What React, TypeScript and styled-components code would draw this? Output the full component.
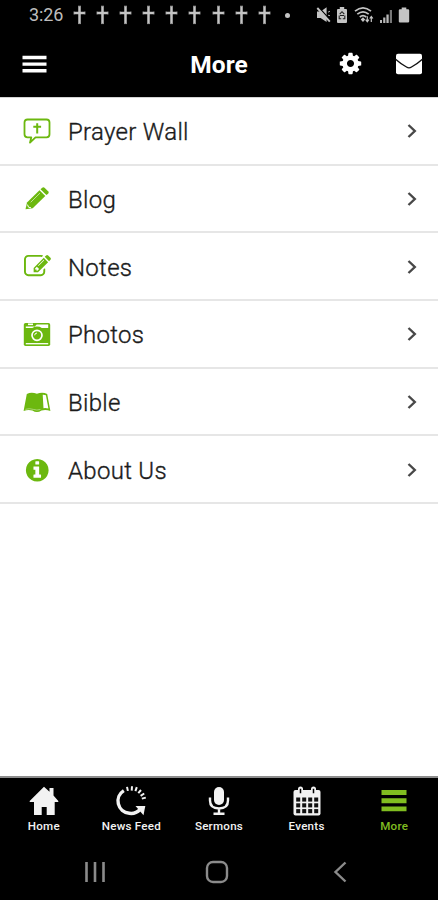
import React from 'react';
import styled, { createGlobalStyle } from 'styled-components';

const GREEN = '#6cb80f';

const GlobalStyle = createGlobalStyle`
  body { margin: 0; background: #fff; }
  * { box-sizing: border-box; }
`;

const Screen = styled.div`
  width: 438px;
  height: 900px;
  display: flex;
  flex-direction: column;
  background: #fff;
  font-family: Roboto, 'Liberation Sans', sans-serif;
  overflow: hidden;
`;

const StatusBar = styled.div`
  height: 30px;
  flex: none;
  display: flex;
  align-items: center;
  padding-left: 29px;
  background: #000;
  color: #bdbdbd;
`;

const Clock = styled.span`
  width: 44px;
  font-size: 18px;
  line-height: 30px;
  letter-spacing: -0.1px;
`;

const Crosses = styled.div`
  display: flex;
  gap: 10.1px;
`;

const Dot = styled.span`
  width: 5px;
  height: 5px;
  margin-left: 14px;
  border-radius: 50%;
  background: #c4c4c4;
`;

const StatusIcons = styled.div`
  display: flex;
  align-items: center;
  margin-left: 26px;
  gap: 5.6px;
`;

const Header = styled.header`
  height: 67px;
  flex: none;
  display: grid;
  grid-template-columns: 1fr auto 1fr;
  align-items: center;
  padding: 0 15px 0 22px;
  background: #000;
  color: #fff;
`;

const Title = styled.h1`
  margin: 2px 7px 0 0;
  font-size: 24.5px;
  line-height: 28px;
  font-weight: 700;
`;

const HeaderActions = styled.div`
  display: flex;
  justify-content: flex-end;
  align-items: center;
  gap: 32px;
`;

const List = styled.main`
  flex: 1;
  display: flex;
  flex-direction: column;
  border-top: 1px solid #d4d4d4;
`;

const Row = styled.div`
  height: 67.7px;
  flex: none;
  display: flex;
  align-items: center;
  padding: 1px 19px 0 22px;
  border-bottom: 2px solid #e6e6e6;
`;

const RowIcon = styled.span`
  width: 30px;
  height: 30px;
  display: flex;
  align-items: center;
  justify-content: center;
`;

const RowLabel = styled.span`
  flex: 1;
  padding: 2px 0 0 16px;
  font-size: 24px;
  line-height: 30px;
  color: #1b1b1b;
  font-weight: 300;
  -webkit-text-stroke: 0.35px #1b1b1b;
  letter-spacing: 0.3px;
`;

const TabBar = styled.nav`
  height: 68px;
  flex: none;
  display: grid;
  grid-template-columns: repeat(5, 1fr);
  border-top: 2px solid #8c8c8c;
  background: #000;
`;

const Tab = styled.div<{ $active?: boolean }>`
  display: flex;
  flex-direction: column;
  align-items: center;
  padding-top: 8px;
  color: ${(p) => (p.$active ? '#80bd20' : '#f2f2f2')};
`;

const TabLabel = styled.span`
  margin-top: 3px;
  font-size: 11.6px;
  line-height: 14px;
  font-weight: 500;
  white-space: nowrap;
  letter-spacing: 0.25px;
`;

const SystemBar = styled.div`
  height: 56px;
  flex: none;
  display: flex;
  align-items: center;
  padding: 0 0 0 84px;
  background: #000;
`;

const RecentsIcon = styled.svg`
  margin-right: 99px;
`;

const CircleHomeIcon = styled.svg`
  margin-right: 104px;
`;

const CrossMark = () => (
  <svg width="13" height="20" viewBox="0 0 13 20">
    <path d="M6.5 1.2V18.6M1 8H12" stroke="#c4c4c4" strokeWidth="2.5" />
    <path d="M5 1.2h3M5 18.6h3M1 6.5v3M12 6.5v3" stroke="#aaa" strokeWidth=".8" />
  </svg>
);

const Mute = () => (
  <svg width="15" height="18" viewBox="0 0 15 18" fill="#c4c4c4">
    <path d="M1 5.500h3.600l6-4.300V16l-6-4H1z" />
    <path d="M2.500 1.200l12 13" stroke="#000" strokeWidth="1.400" />
    <path d="M1.300 2L13.800 15.700" stroke="#c4c4c4" strokeWidth="1.900" />
    <path d="M12 6.200l2-1M12 9.200l2 .5" stroke="#aaa" strokeWidth="1" />
  </svg>
);

const Saver = () => (
  <svg width="12" height="18" viewBox="0 0 12 18">
    <path d="M3.800 1h4.400v2H10q1 0 1 1v12q0 1-1 1H2q-1 0-1-1V4q0-1 1-1h1.800z" fill="#c4c4c4" />
    <path d="M3.700 8.200L6 5.700l2.300 2.500M3.200 9.500v3.300h2M8.800 9.500v3.300h-2M4 9.500h4" stroke="#222" strokeWidth="1.100" fill="none" />
  </svg>
);

const Wifi = () => (
  <svg width="20" height="18" viewBox="0 0 20 18" fill="none" stroke="#c4c4c4">
    <path d="M1 5.200Q9-1.600 17 5.200M3.300 8.200q5.700-4.800 11.400 0M5.800 11q3.200-2.800 6.400 0" strokeWidth="1.700" />
    <path d="M9 11.200l2.200 2.300L9 16l-2.300-2.500z" fill="#c4c4c4" stroke="none" />
    <path d="M13.300 10.200v5.400m-1.600-1.900l1.600 2 1.600-2M17.300 16v-5.400m-1.600 1.900l1.600-2 1.600 2" strokeWidth="1.200" />
  </svg>
);

const Signal = () => (
  <svg width="13" height="17" viewBox="0 0 13 17" fill="#b8b8b8">
    <path d="M0 13h2v3H0zM3.200 10.500h2.200V16H3.200zM6.400 7.500h2.300V16H6.400z" />
    <path d="M9.800 3H12v13H9.800z" fill="#777" />
  </svg>
);

const Battery = () => (
  <svg width="12" height="18" viewBox="0 0 12 18">
    <path d="M3.700 1.500h4.600v1.700H10q1.200 0 1.200 1.100v11.200q0 1-1.200 1H2q-1.200 0-1.200-1V4.300q0-1.100 1.200-1.100h1.700z" fill="#c4c4c4" />
  </svg>
);

const MenuIcon = () => (
  <svg width="25" height="18" viewBox="0 0 25 18" fill="#fff">
    <path d="M.5 .8h24V4.200H.5zM.5 7.500h24v3.300H.5zM.5 14h24v3.400H.5z" />
  </svg>
);

const Gear = () => (
  <svg width="25" height="25" viewBox="0 0 1792 1792" fill="#fff">
    <path d="M1152 896q0-106-75-181t-181-75-181 75-75 181 75 181 181 75 181-75 75-181zm512-109v222q0 12-8 23t-20 13l-185 28q-19 54-39 91 35 50 107 138 10 12 10 25t-9 23q-27 37-99 108t-94 71q-12 0-26-9l-138-108q-44 23-91 38-16 136-29 186-7 28-36 28h-222q-14 0-24.500-8.500t-11.500-21.500l-28-184q-49-16-90-37l-141 107q-10 9-25 9-14 0-25-11-126-114-165-168-7-10-7-23 0-12 8-23 15-21 51-66.500t54-70.500q-27-50-41-99l-183-27q-13-2-21-12.500t-8-23.500v-222q0-12 8-23t19-13l186-28q14-46 39-92-40-57-107-138-10-12-10-24 0-10 9-23 26-36 98.500-107.500t94.500-71.500q13 0 26 10l138 107q44-23 91-38 16-136 29-186 7-28 36-28h222q14 0 24.500 8.500t11.500 21.500l28 184q49 16 90 37l142-107q9-9 24-9 13 0 25 10 129 119 165 170 7 8 7 22 0 12-8 23-15 21-51 66.500t-54 70.500q26 50 41 98l183 28q13 2 21 12.500t8 23.500z" />
  </svg>
);

const Mail = () => (
  <svg width="28" height="22" viewBox="0 0 28 22">
    <rect x="1" y=".8" width="26" height="20.400" rx="2" fill="#fff" />
    <path d="M.6 6.200Q6 11 11.500 14q2.500 1.800 5 0Q22 11 27.400 6.200" stroke="#111" strokeWidth="1.400" fill="none" />
  </svg>
);

const PrayerIcon = () => (
  <svg width="28" height="27" viewBox="0 0 28 27" fill="none" stroke={GREEN}>
    <path d="M4.500 1.500h19q3 0 3 3v11.800q0 3-3 3H12.500L7 24.600l1.300-5.300H4.500q-3 0-3-3V4.500q0-3 3-3z" strokeWidth="1.800" strokeLinejoin="round" />
    <path d="M14.200 5.200v10.400M10.300 8.700h7.800" strokeWidth="2" />
  </svg>
);

const PencilIcon = () => (
  <svg width="26" height="26" viewBox="0 0 26 26">
    <path d="M1.500 23.300L3 16.500 15.500 4.300l5.800 5.700L8.700 22.300z" fill={GREEN} />
    <path d="M16.500 3.300l1.700-1.600q1.300-1 2.600.2l3.300 3.300q1.200 1.300.1 2.500L22.400 9z" fill={GREEN} />
    <path d="M6.700 16.300l9.300-9.200" stroke="#c9e6a4" strokeWidth=".9" />
    <path d="M3.500 18.600l1 2.600 2.500.6" stroke="#fff" strokeWidth="1" fill="none" />
  </svg>
);

const NotesIcon = () => (
  <svg width="27" height="27" viewBox="0 0 1792 1792" fill={GREEN}>
    <path d="M888 1184l116-116-152-152-116 116v56h96v96h56zm440-720q-16-16-33 1l-350 350q-17 17-1 33t33-1l350-350q17-17 1-33zm80 594v190q0 119-84.500 203.500t-203.500 84.500h-832q-119 0-203.500-84.500t-84.500-203.500v-832q0-119 84.500-203.500t203.500-84.500h832q63 0 117 25 15 7 18 23 3 17-9 29l-49 49q-14 14-32 8-23-6-45-6h-832q-66 0-113 47t-47 113v832q0 66 47 113t113 47h832q66 0 113-47t47-113v-126q0-13 9-22l64-64q15-15 35-7t20 29zm-96-738l288 288-672 672h-288v-288zm444 132l-92 92-288-288 92-92q28-28 68-28t68 28l152 152q28 28 28 68t-28 68z" />
  </svg>
);

const CameraIcon = () => (
  <svg width="28" height="25" viewBox="0 0 28 25">
    <rect x=".8" y="1" width="26.400" height="23" rx="1.700" fill={GREEN} />
    <path d="M2.800 4.600h9l1.900-2.100h11.500v3.400h-6.400q-2-1.300-4.800-1.300-2.600 0-4.600 1.300H2.800z" fill="#fff" />
    <rect x="5" y="1.500" width="5" height="1.600" fill="#fff" />
    <path d="M2.800 21.700h22.400" stroke="#fff" strokeWidth="1.300" />
    <circle cx="14" cy="13.300" r="6.900" fill={GREEN} />
    <circle cx="14" cy="13.300" r="5" fill="none" stroke="#fff" strokeWidth="1.700" />
    <path d="M11.700 13.300q0-2.200 2.300-2.300" stroke="#fff" strokeWidth="1" fill="none" />
  </svg>
);

const BookIcon = () => (
  <svg width="28" height="20" viewBox="0 0 28 20">
    <path d="M3.800 1.900Q8.500-.2 13.900 1.800 19.400-.2 24.200 1.900L27.400 19q-4.600-1.800-8.900-.5-2.400 1.500-4.600 1.500t-4.500-1.500Q5.200 17.200.6 19z" fill={GREEN} />
    <path d="M19.700 2.700q1.800-.1 3.200.5l2.500 13.300q-2.400-.6-4.900-.3z" fill="#fff" />
    <path d="M2.400 17.300q4.300-1.200 7.900.1 3.600 1.300 7.100.1" fill="none" stroke="#c5e3a0" strokeWidth=".7" />
  </svg>
);

const InfoIcon = () => (
  <svg width="26.500" height="26.500" viewBox="0 0 1792 1792" fill={GREEN}>
    <path d="M1152 1376v-160q0-14-9-23t-23-9h-96v-512q0-14-9-23t-23-9h-320q-14 0-23 9t-9 23v160q0 14 9 23t23 9h96v320h-96q-14 0-23 9t-9 23v160q0 14 9 23t23 9h448q14 0 23-9t9-23zm-128-896v-160q0-14-9-23t-23-9h-192q-14 0-23 9t-9 23v160q0 14 9 23t23 9h192q14 0 23-9t9-23zm640 416q0 209-103 385.500t-279.500 279.500-385.500 103-385.500-103-279.500-279.500-103-385.500 103-385.500 279.500-279.500 385.500-103 385.500 103 279.500 279.500 103 385.500z" />
  </svg>
);

const Chevron = () => (
  <svg width="14" height="18" viewBox="0 0 14 18" fill="none" stroke="#484848" strokeWidth="2.400">
    <path d="M3.500 3l6.300 6-6.300 6" />
  </svg>
);

const HomeIcon = () => (
  <svg width="30" height="30" viewBox="0 0 30 30" fill="currentColor">
    <path d="M15 .8l5.500 5V2h4v7.500L29.300 15v1h-3.600v13h-8V21h-5v8H5V16H.7v-1z" />
  </svg>
);

const NewsIcon = () => (
  <svg width="32" height="30" viewBox="0 0 32 30" fill="none" stroke="currentColor">
    <path d="M8.800 4.600A12.300 12.300 0 0 0 14.300 27.300 12.300 12.300 0 0 0 25 23.500" strokeWidth="3.400" />
    <path d="M20.500 20h9.800L28.500 29.300z" fill="currentColor" stroke="none" />
    <path d="M12 .9l.9 4M17 .3l-.3 4.300M21.800 1.200l-1.400 4M26 4l-2.700 3.200M29.200 7.500l-3.600 2.300M30.800 11.600l-4 1" strokeWidth="2" />
  </svg>
);

const MicIcon = () => (
  <svg width="24" height="30" viewBox="0 0 24 30" fill="none" stroke="currentColor">
    <rect x="7" y="1" width="10" height="18" rx="5" fill="currentColor" stroke="none" />
    <path d="M3 11.500v3q0 8 9 8t9-8v-3M12 22v6M6.500 27.700h11" strokeWidth="2.400" />
  </svg>
);

const CalendarIcon = () => {
  const cells = [3.2, 9.2, 15.2, 21.2].flatMap((x) => [11.5, 17.3, 23.1].map((y) => [x, y]));
  return (
    <svg width="28" height="30" viewBox="0 0 28 30" fill="currentColor">
      <rect x=".5" y="4" width="27" height="25.500" rx="2" />
      <rect x="5" y=".5" width="5" height="9" rx="2.500" />
      <rect x="18" y=".5" width="5" height="9" rx="2.500" />
      <path d="M7.500 2.700v4.500M20.500 2.700v4.500" stroke="#000" strokeWidth="1.500" />
      {cells.map(([x, y]) => (
        <rect key={`${x}-${y}`} x={x} y={y} width="4" height="4.100" fill="#111" />
      ))}
    </svg>
  );
};

const MoreIcon = () => (
  <svg width="26" height="30" viewBox="0 0 26 30" fill="currentColor">
    <path d="M.5 4h25v5H.5zM.5 12.300h25v4.900H.5zM.5 20.500h25v4.800H.5z" />
  </svg>
);

const rows = [
  { label: 'Prayer Wall', icon: <PrayerIcon /> },
  { label: 'Blog', icon: <PencilIcon /> },
  { label: 'Notes', icon: <NotesIcon /> },
  { label: 'Photos', icon: <CameraIcon /> },
  { label: 'Bible', icon: <BookIcon /> },
  { label: 'About Us', icon: <InfoIcon /> },
];

const tabs = [
  { label: 'Home', icon: <HomeIcon /> },
  { label: 'News Feed', icon: <NewsIcon /> },
  { label: 'Sermons', icon: <MicIcon /> },
  { label: 'Events', icon: <CalendarIcon /> },
  { label: 'More', icon: <MoreIcon />, active: true },
];

export default function App() {
  return (
    <>
      <GlobalStyle />
      <Screen>
        <StatusBar>
          <Clock>3:26</Clock>
          <Crosses>
            {Array.from({ length: 9 }, (_, i) => (
              <CrossMark key={i} />
            ))}
          </Crosses>
          <Dot />
          <StatusIcons>
            <Mute />
            <Saver />
            <Wifi />
            <Signal />
            <Battery />
          </StatusIcons>
        </StatusBar>
        <Header>
          <MenuIcon />
          <Title>More</Title>
          <HeaderActions>
            <Gear />
            <Mail />
          </HeaderActions>
        </Header>
        <List>
          {rows.map((r) => (
            <Row key={r.label}>
              <RowIcon>{r.icon}</RowIcon>
              <RowLabel>{r.label}</RowLabel>
              <Chevron />
            </Row>
          ))}
        </List>
        <TabBar>
          {tabs.map((t) => (
            <Tab key={t.label} $active={t.active}>
              {t.icon}
              <TabLabel>{t.label}</TabLabel>
            </Tab>
          ))}
        </TabBar>
        <SystemBar>
          <RecentsIcon width="22" height="22" viewBox="0 0 22 22" stroke="#8b8b8b" strokeWidth="2.600">
            <path d="M2.500 1v20M11 1v20M19.500 1v20" />
          </RecentsIcon>
          <CircleHomeIcon width="24" height="24" viewBox="0 0 24 24" fill="none" stroke="#8b8b8b" strokeWidth="2.400">
            <rect x="2" y="2" width="20" height="20" rx="6" />
          </CircleHomeIcon>
          <svg width="14" height="22" viewBox="0 0 14 22" fill="none" stroke="#8b8b8b" strokeWidth="2.400">
            <path d="M12.500 1.500L2.500 11l10 9.500" />
          </svg>
        </SystemBar>
      </Screen>
    </>
  );
}
